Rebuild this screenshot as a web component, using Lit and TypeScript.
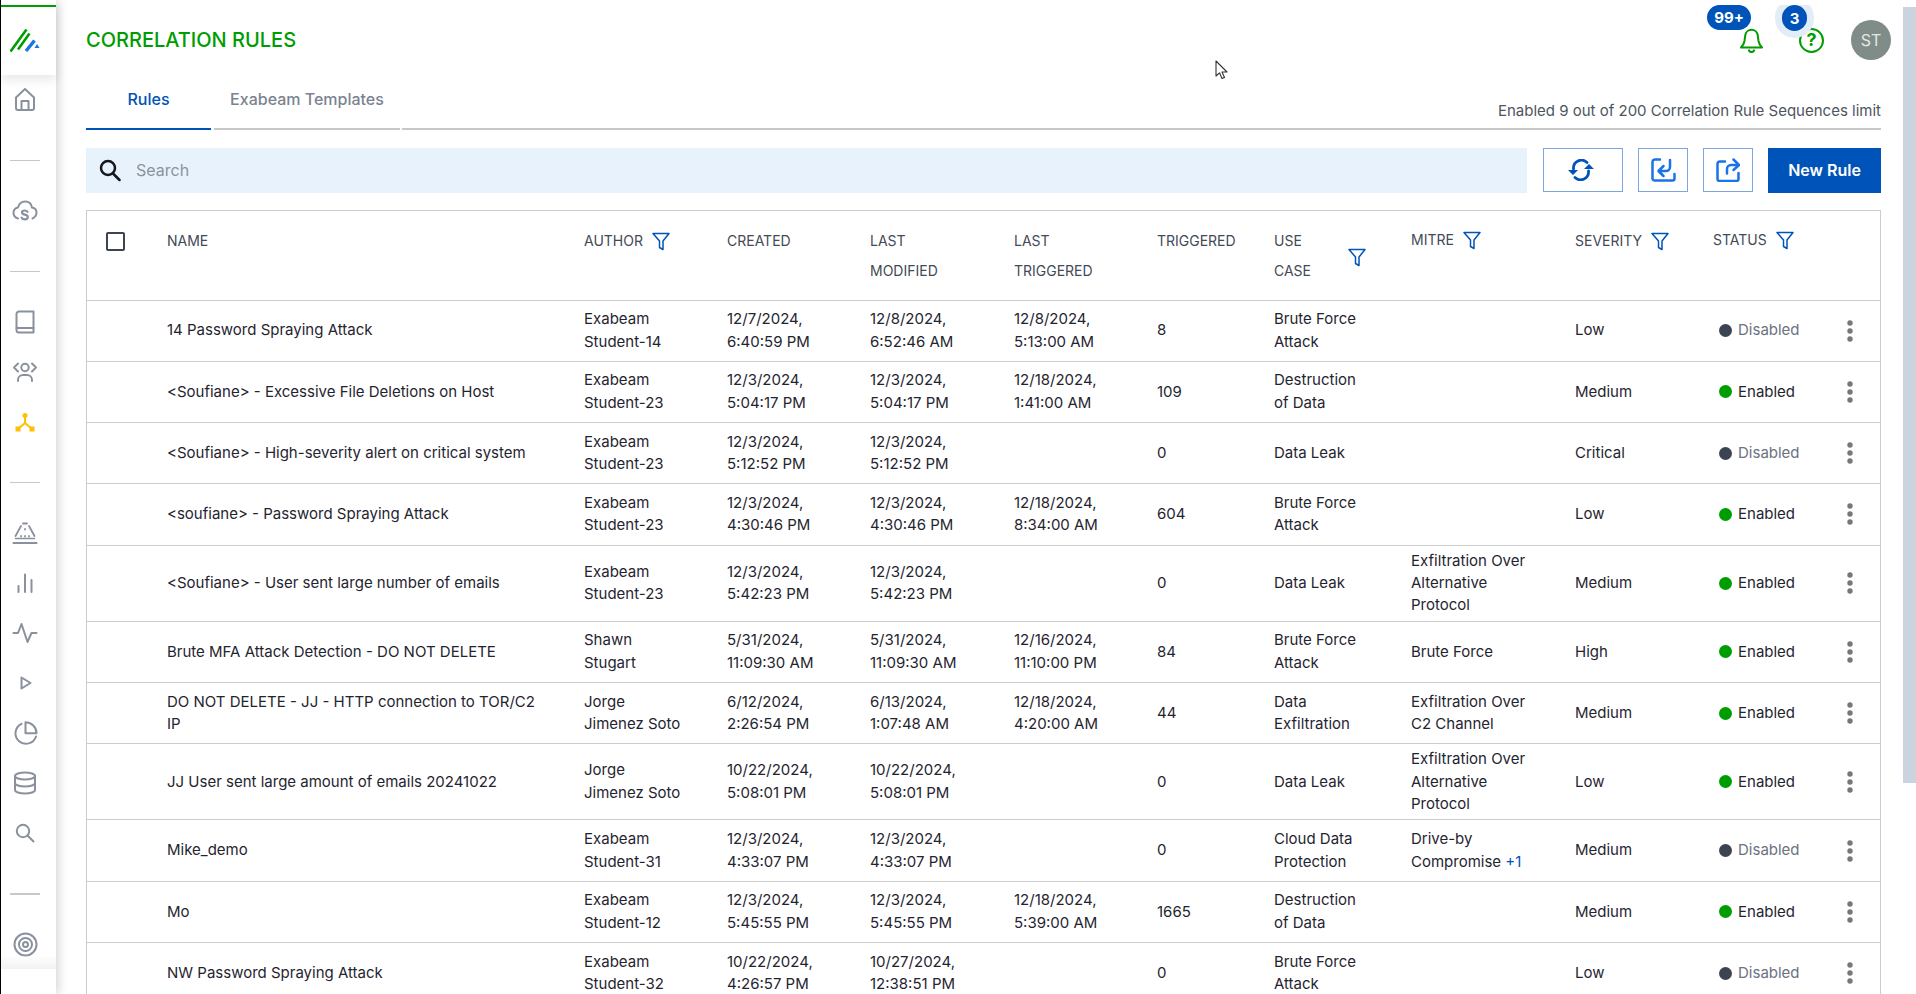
import { LitElement, html, css, svg } from "lit";
import { customElement } from "lit/decorators.js";

interface Row {
  name: string; author: string; created: string; modified: string; last: string;
  count: string; useCase: string; mitre: string; extra?: string; severity: string; enabled: boolean;
}

const rows: Row[] = [
  { name: "14 Password Spraying Attack", author: "Exabeam\nStudent-14", created: "12/7/2024,\n6:40:59 PM", modified: "12/8/2024,\n6:52:46 AM", last: "12/8/2024,\n5:13:00 AM", count: "8", useCase: "Brute Force\nAttack", mitre: "", severity: "Low", enabled: false },
  { name: "<Soufiane> - Excessive File Deletions on Host", author: "Exabeam\nStudent-23", created: "12/3/2024,\n5:04:17 PM", modified: "12/3/2024,\n5:04:17 PM", last: "12/18/2024,\n1:41:00 AM", count: "109", useCase: "Destruction\nof Data", mitre: "", severity: "Medium", enabled: true },
  { name: "<Soufiane> - High-severity alert on critical system", author: "Exabeam\nStudent-23", created: "12/3/2024,\n5:12:52 PM", modified: "12/3/2024,\n5:12:52 PM", last: "", count: "0", useCase: "Data Leak", mitre: "", severity: "Critical", enabled: false },
  { name: "<soufiane> - Password Spraying Attack", author: "Exabeam\nStudent-23", created: "12/3/2024,\n4:30:46 PM", modified: "12/3/2024,\n4:30:46 PM", last: "12/18/2024,\n8:34:00 AM", count: "604", useCase: "Brute Force\nAttack", mitre: "", severity: "Low", enabled: true },
  { name: "<Soufiane> - User sent large number of emails", author: "Exabeam\nStudent-23", created: "12/3/2024,\n5:42:23 PM", modified: "12/3/2024,\n5:42:23 PM", last: "", count: "0", useCase: "Data Leak", mitre: "Exfiltration Over\nAlternative\nProtocol", severity: "Medium", enabled: true },
  { name: "Brute MFA Attack Detection - DO NOT DELETE", author: "Shawn\nStugart", created: "5/31/2024,\n11:09:30 AM", modified: "5/31/2024,\n11:09:30 AM", last: "12/16/2024,\n11:10:00 PM", count: "84", useCase: "Brute Force\nAttack", mitre: "Brute Force", severity: "High", enabled: true },
  { name: "DO NOT DELETE - JJ - HTTP connection to TOR/C2 IP", author: "Jorge\nJimenez Soto", created: "6/12/2024,\n2:26:54 PM", modified: "6/13/2024,\n1:07:48 AM", last: "12/18/2024,\n4:20:00 AM", count: "44", useCase: "Data\nExfiltration", mitre: "Exfiltration Over\nC2 Channel", severity: "Medium", enabled: true },
  { name: "JJ User sent large amount of emails 20241022", author: "Jorge\nJimenez Soto", created: "10/22/2024,\n5:08:01 PM", modified: "10/22/2024,\n5:08:01 PM", last: "", count: "0", useCase: "Data Leak", mitre: "Exfiltration Over\nAlternative\nProtocol", severity: "Low", enabled: true },
  { name: "Mike_demo", author: "Exabeam\nStudent-31", created: "12/3/2024,\n4:33:07 PM", modified: "12/3/2024,\n4:33:07 PM", last: "", count: "0", useCase: "Cloud Data\nProtection", mitre: "Drive-by\nCompromise", extra: "+1", severity: "Medium", enabled: false },
  { name: "Mo", author: "Exabeam\nStudent-12", created: "12/3/2024,\n5:45:55 PM", modified: "12/3/2024,\n5:45:55 PM", last: "12/18/2024,\n5:39:00 AM", count: "1665", useCase: "Destruction\nof Data", mitre: "", severity: "Medium", enabled: true },
  { name: "NW Password Spraying Attack", author: "Exabeam\nStudent-32", created: "10/22/2024,\n4:26:57 PM", modified: "10/27/2024,\n12:38:51 PM", last: "", count: "0", useCase: "Brute Force\nAttack", mitre: "", severity: "Low", enabled: false },
];

const icon = (w: number, h: number, body: unknown) => html`<svg width=${w} height=${h} viewBox="0 0 ${w} ${h}" fill="none" stroke="currentColor" stroke-width="2" stroke-linecap="round" stroke-linejoin="round">${body}</svg>`;

const navIcons = {
  home: icon(24, 24, svg`<path d="M3 9.500 12 1l9 8.500V20a2 2 0 0 1-2 2H5a2 2 0 0 1-2-2Z"/><path d="M8.500 22V13h7v9"/>`),
  cloud: icon(26, 24, svg`<path d="M6 19.500C3 18.500 1.500 16.500 1.500 14c0-3 2-5 4.500-5.500C7 5 9.500 2.500 13 2.500c4 0 6.500 2.500 7 6 2.500.5 4.500 2.500 4.500 5 0 3-2 5-4 6"/><path d="M15.500 12.800c-.6-1-1.500-1.300-2.800-1.300-1.500 0-2.700.7-2.700 2 0 2.800 5.800 1.500 5.800 4.500 0 1.400-1.300 2.300-3 2.300-1.500 0-2.600-.5-3.200-1.600" stroke-width="2.200"/>`),
  book: icon(20, 24, svg`<path d="M4 1.500h14.500v21H4a2.500 2.500 0 0 1-2.500-2.500V4A2.500 2.500 0 0 1 4 1.500Z"/><path d="M1.500 18h17"/>`),
  people: icon(26, 20, svg`<circle cx="13" cy="5.500" r="3.700"/><path d="M6 1.500 2 5.500l4 4M20 1.500l4 4-4 4"/><path d="M6 19v-1a5 5 0 0 1 5-5h4a5 5 0 0 1 5 5v1"/>`),
  nodes: html`<svg width="20" height="20" viewBox="0 0 20 20" fill="#ffc000" stroke="#ffc000" stroke-width="2"><circle cx="10" cy="3.500" r="2.500" stroke="none"/><path d="M10 5v6L3 17M10 11l7 6" fill="none"/><rect x="0.500" y="14.500" width="5" height="5" stroke="none"/><rect x="14.500" y="14.500" width="5" height="5" stroke="none"/></svg>`,
  alert: icon(26, 24, svg`<path d="M9 5 3.500 15M17 5l5.500 10M11 2.500h4" stroke-width="1.800"/><path d="M1.500 22h23" stroke-width="2.200"/><path d="M13 8v.5M9 15v.5M17 15v.5M13 15v.5" stroke-width="1.800"/><path d="M3.500 17.500h19" stroke-width="1.500"/>`),
  bars: icon(18, 20, svg`<path d="M2.500 13v6M9 1.500V19M15.500 7v12"/>`),
  pulse: icon(26, 22, svg`<path d="M1.500 11H6l3.500-9 6 18 4-9H24.500"/>`),
  play: icon(14, 14, svg`<path d="M3.500 1.500 12.500 7l-9 5.500Z"/>`),
  pie: icon(25, 24, svg`<path d="M8.500 2.800A10.500 10.500 0 1 0 23 15.500"/><path d="M12.500 1.200a11 11 0 0 1 11 11h-11Z"/>`),
  db: icon(24, 24, svg`<ellipse cx="12" cy="5" rx="10" ry="3.500"/><path d="M2 5v14c0 2 4.500 3.500 10 3.500S22 21 22 19V5M2 12c0 2 4.500 3.500 10 3.500S22 14 22 12"/>`),
  search: icon(20, 20, svg`<circle cx="8" cy="8" r="6.200"/><path d="m12.500 12.500 6 6"/>`),
  target: icon(25, 25, svg`<circle cx="12.500" cy="12.500" r="11"/><circle cx="12.500" cy="12.500" r="6.500"/><circle cx="12.500" cy="12.500" r="2.500"/>`),
};

const filterIcon = html`<svg class="filter" width="18" height="19" viewBox="0 0 18 19" fill="none" stroke="#0053b8" stroke-width="1.500" stroke-linejoin="round"><path d="M1 1.500h16l-6 7.500v8.500L7.500 15.500V9Z"/></svg>`;
const kebab = html`<svg width="6" height="22" viewBox="0 0 6 22" fill="#777"><circle cx="3" cy="3" r="2.700"/><circle cx="3" cy="11" r="2.700"/><circle cx="3" cy="19" r="2.700"/></svg>`;

@customElement("app-root")
export class AppRoot extends LitElement {
  static styles = css`
    :host { display: block; width: 1916px; height: 994px; overflow: hidden; position: relative; background: #fff; font-family: Inter, "Liberation Sans", sans-serif; color: #1f2530; }
    * { box-sizing: border-box; }
    .page { display: flex; height: 994px; }
    .side { width: 56px; flex: none; border-left: 1px solid #000; background: #fff; box-shadow: 3px 0 9px rgba(0,0,0,.16); position: relative; z-index: 2; }
    .logo { margin-top: 5px; height: 70px; border-top: 2px solid #009d00; padding: 22px 0 0 9px; box-shadow: 0 5px 10px rgba(0,0,0,.09); position: relative; background: #fff; }
    .logo svg { display: block; }
    .nav { width: 48px; display: flex; flex-direction: column; align-items: center; color: #8a919e; }
    .navwrap { position: relative; height: 894px; }
    .navwrap::after { content: ""; position: absolute; left: 0; right: 0; bottom: 0; height: 14px; background: linear-gradient(rgba(240,240,240,0), #f2f2f2); }
    .item { height: 50px; width: 48px; display: flex; align-items: center; justify-content: center; }
    .sep { width: 30px; height: 1px; background: #c8c8c8; margin: 35px 0 25px; flex: none; }
    .sep.thick { height: 2px; margin: 35px 0 24px; }
    .main { flex: 1; min-width: 0; padding: 0 35px 0 30px; }
    .top { height: 80px; display: flex; align-items: center; justify-content: space-between; }
    h1 { margin: 0; font-size: 20px; font-weight: 500; color: #009d00; }
    .actions { display: flex; align-items: center; margin-right: -10px; position: relative; color: #009d00; }
    .bell { width: 25px; height: 26px; position: relative; display: block; }
    .help { width: 25px; height: 25px; border-radius: 50%; border: 2.500px solid #009d00; margin-left: 35px; margin-right: 27px; display: flex; align-items: center; justify-content: center; font-size: 18px; font-weight: 700; color: #009d00; line-height: 1; }
    .avatar { width: 40px; height: 40px; border-radius: 50%; background: #7f8c88; color: #e3e7e5; font-size: 16px; display: flex; align-items: center; justify-content: center; }
    .badge { position: absolute; background: #0053b8; color: #fff; font-size: 15px; font-weight: 700; display: flex; align-items: center; justify-content: center; border-radius: 13px; height: 25px; top: -15px; z-index: 1; }
    .badge.b1 { width: 44px; left: -32px; }
    .badge.b2 { width: 25px; height: 26px; left: 43px; box-shadow: 0 0 0 7px #e3edf8; clip-path: inset(0 -8px -8px -8px); }
    .tabs { display: flex; height: 50px; gap: 2px; }
    .tab { display: flex; align-items: center; justify-content: center; font-size: 16px; font-weight: 500; border-bottom: 2px solid #c8c8c8; padding-bottom: 10px; color: #7b8390; }
    .tab.active { width: 125px; color: #0053b8; border-bottom-color: #0053b8; margin-right: 1px; }
    .tab.other { width: 186px; }
    .limit { flex: 1; border-bottom: 2px solid #c8c8c8; display: flex; align-items: center; justify-content: flex-end; padding-top: 13px; font-size: 15px; color: #4e5560; }
    .toolbar { display: flex; height: 45px; margin-top: 18px; }
    .search { width: 1441px; background: #e8f2fc; display: flex; align-items: center; padding-left: 13px; gap: 15px; font-size: 16px; color: #8a929c; }
    .search span { padding-bottom: 2px; }
    .btn { height: 44px; border: 1px solid #7aa7e0; background: #fff; display: flex; align-items: center; justify-content: center; margin-left: 15px; }
    .btn.r { width: 80px; margin-left: 16px; padding-right: 5px; }
    .btn.s { width: 50px; }
    .new { width: 113px; height: 45px; padding-bottom: 2px; background: #0053b8; color: #fff; font-size: 16px; font-weight: 600; display: flex; align-items: center; justify-content: center; margin-left: 15px; }
    .table { margin-top: 17px; border: 1px solid #ccc; border-bottom: none; }
    .row { display: grid; grid-template-columns: 80px 417px 143px 143px 144px 143px 117px 137px 164px 138px 117px 40px 1fr; align-items: center; min-height: 61.250px; padding: 4px 0; border-bottom: 1px solid #ccc; font-size: 15px; line-height: 22.400px; white-space: pre-line; color: #1f2530; }
    .name { padding-right: 40px; }
    .head { height: 89.500px; align-items: start; padding: 15px 0 0; font-size: 14px; line-height: 30px; color: #434a55; white-space: normal; }
    .hc { display: flex; align-items: center; gap: 9px; }
    .hc.up { margin-top: -1px; }
    .filter { flex: none; display: block; }
    .usecase { display: flex; align-items: center; }
    .usecase .lbl { width: 74px; }
    .usecase .filter { margin-top: 2px; }
    .check { width: 19px; height: 19px; border: 2px solid #3d4451; border-radius: 2px; margin: 6px 0 0 19px; }
    .status { display: flex; align-items: center; gap: 6px; padding-left: 6px; }
    .dot { width: 13px; height: 13px; border-radius: 50%; background: #009d00; flex: none; }
    .off .dot { background: #3d4451; }
    .off { color: #6b7280; }
    .keb { display: flex; justify-content: center; }
    .more { color: #0053b8; }
    .scroll { position: absolute; top: 7px; left: 1903px; width: 13px; height: 776px; background: #cbd3df; z-index: 3; }
    .cursor { position: absolute; left: 1215px; top: 60px; z-index: 3; display: block; }
  `;

  render() {
    return html`
      <div class="page">
        <aside class="side">
          <div class="logo">
            <svg width="31" height="24" viewBox="0 0 31 24" fill="none">
              <path d="M0.500 22.500 16.500 0.500M8 20.500 19.500 4.500" stroke="#009d00" stroke-width="2.600"/>
              <path d="M16 22 24.500 11.500" stroke="#1a73e8" stroke-width="3.400"/>
              <path d="M24.500 19 27 15 29.500 19Z" fill="#1a73e8"/>
            </svg>
          </div>
          <div class="navwrap">
            <nav class="nav">
              <div class="item">${navIcons.home}</div>
              <div class="sep"></div>
              <div class="item">${navIcons.cloud}</div>
              <div class="sep"></div>
              <div class="item">${navIcons.book}</div>
              <div class="item">${navIcons.people}</div>
              <div class="item">${navIcons.nodes}</div>
              <div class="sep"></div>
              <div class="item">${navIcons.alert}</div>
              <div class="item">${navIcons.bars}</div>
              <div class="item">${navIcons.pulse}</div>
              <div class="item">${navIcons.play}</div>
              <div class="item">${navIcons.pie}</div>
              <div class="item">${navIcons.db}</div>
              <div class="item">${navIcons.search}</div>
              <div class="sep thick"></div>
              <div class="item">${navIcons.target}</div>
            </nav>
          </div>
        </aside>
        <main class="main">
          <header class="top">
            <h1>CORRELATION RULES</h1>
            <div class="actions">
              <div class="badge b1">99+</div>
              <svg class="bell" viewBox="0 0 24 26" fill="none" stroke="currentColor" stroke-width="2" stroke-linecap="round" stroke-linejoin="round">
                <path d="M1.500 20.500h21c-2-2-3-3.500-3.500-6.500l-.8-6a6.300 6.300 0 0 0-12.400 0l-.8 6c-.5 3-1.500 4.500-3.500 6.500Z"/>
                <path d="M9.500 23.500a2.800 2.800 0 0 0 5 0" stroke-width="2.200"/>
              </svg>
              <div class="badge b2">3</div>
              <div class="help">?</div>
              <div class="avatar">ST</div>
            </div>
          </header>
          <div class="tabs">
            <div class="tab active">Rules</div>
            <div class="tab other">Exabeam Templates</div>
            <div class="limit">Enabled 9 out of 200 Correlation Rule Sequences limit</div>
          </div>
          <div class="toolbar">
            <div class="search">
              <svg width="22" height="23" viewBox="0 0 22 23" fill="none" stroke="#14171c" stroke-width="2.500" stroke-linecap="round"><circle cx="9" cy="9" r="7"/><path d="m14.500 15 6 6"/></svg>
              <span>Search</span>
            </div>
            <div class="btn r">
              <svg width="28" height="22" viewBox="0 0 28 22" fill="none" stroke="#0053b8" stroke-width="2.800" stroke-linecap="round">
                <path d="M6.500 10a8 8 0 0 1 13.500-6.500"/>
                <path d="M21.500 12a8 8 0 0 1-13.500 6.500"/>
                <path d="M1 11h10l-5 5ZM17 10h10l-5-5Z" fill="#0053b8" stroke="none"/>
              </svg>
            </div>
            <div class="btn s">
              <svg width="25" height="24" viewBox="0 0 25 24" fill="none" stroke="#1a73e8" stroke-width="2.500" stroke-linecap="round" stroke-linejoin="round">
                <path d="M9 1.500H4A2.500 2.500 0 0 0 1.500 4v17A2 2 0 0 0 3.500 22.500h18a2 2 0 0 0 2-2V16"/>
                <path d="M19 2v7a4 4 0 0 1-4 4H8M12.500 8 7.500 13l5 5"/>
              </svg>
            </div>
            <div class="btn s">
              <svg width="24" height="24" viewBox="0 0 24 24" fill="none" stroke="#1a73e8" stroke-width="2.500" stroke-linecap="round" stroke-linejoin="round">
                <path d="M9 3.500H4A2.500 2.500 0 0 0 1.500 6v15A2 2 0 0 0 3.500 23h17a2 2 0 0 0 2-2v-6"/>
                <path d="M11 15.500V11a4 4 0 0 1 4-4h7M17.500 1.500 23 7l-5.500 5" />
              </svg>
            </div>
            <div class="new">New Rule</div>
          </div>
          <div class="table">
            <div class="row head">
              <div><div class="check"></div></div>
              <div>NAME</div>
              <div class="hc">AUTHOR ${filterIcon}</div>
              <div>CREATED</div>
              <div>LAST<br />MODIFIED</div>
              <div>LAST<br />TRIGGERED</div>
              <div>TRIGGERED</div>
              <div class="usecase"><div class="lbl">USE<br />CASE</div>${filterIcon}</div>
              <div class="hc up">MITRE ${filterIcon}</div>
              <div class="hc">SEVERITY ${filterIcon}</div>
              <div class="hc up">STATUS ${filterIcon}</div>
              <div></div><div></div>
            </div>
            ${rows.map((r) => html`
              <div class="row">
                <div></div>
                <div class="name">${r.name}</div>
                <div>${r.author}</div>
                <div>${r.created}</div>
                <div>${r.modified}</div>
                <div>${r.last}</div>
                <div>${r.count}</div>
                <div>${r.useCase}</div>
                <div>${r.mitre}${r.extra ? html` <span class="more">${r.extra}</span>` : ""}</div>
                <div>${r.severity}</div>
                <div class="status ${r.enabled ? "" : "off"}"><span class="dot"></span>${r.enabled ? "Enabled" : "Disabled"}</div>
                <div class="keb">${kebab}</div>
                <div></div>
              </div>`)}
          </div>
        </main>
      </div>
      <div class="scroll"></div>
      <svg class="cursor" width="14" height="20" viewBox="0 0 14 20"><path d="M1 1v15l3.500-3.200L7 18.500l2.500-1.100L7 12h5Z" fill="#fff" stroke="#333" stroke-width="1.100" stroke-linejoin="round"/></svg>
    `;
  }
}
